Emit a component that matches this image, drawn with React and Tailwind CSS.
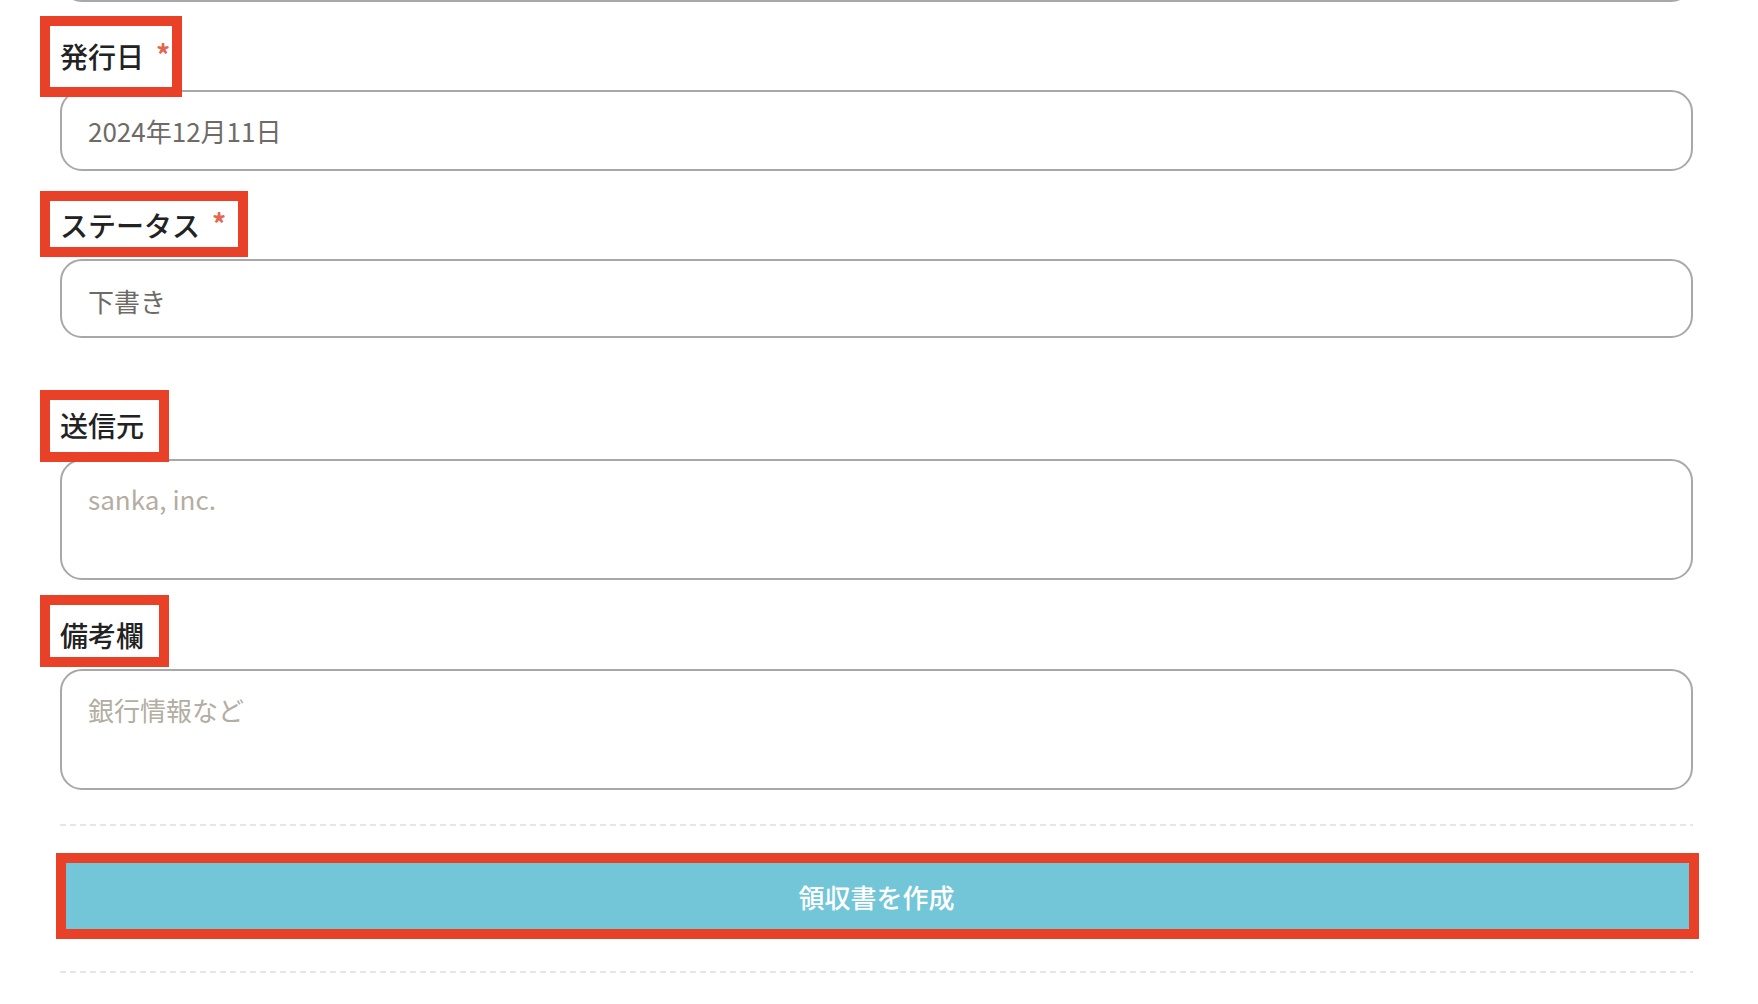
import React from 'react';

const font = { fontFamily: '"Noto Sans CJK JP", "Noto Sans", sans-serif' };

function Label({ text, required, box }) {
  return (
    <div className="relative h-[36px] leading-[36px] text-[28px] font-medium text-[#222222] flex items-center">
      <span>{text}</span>
      {required && <span className="ml-[12px] self-start mt-[-2px] text-[28px] font-bold text-[#e4664c]">*</span>}
      {/* annotation box */}
      <div className={`absolute left-[-20px] border-[10px] border-[#e94128] pointer-events-none ${box}`}></div>
    </div>
  );
}

function App() {
  return (
    <div className="min-h-screen bg-white overflow-hidden" style={font}>
      <div className="ml-[60px] w-[1633px] flex flex-col">
        {/* previous field, cut off at the top */}
        <div className="h-[60px] -mt-[58px] border-2 border-[#a8a8a8] rounded-[22px]"></div>

        <div className="mt-[36px]">
          <Label text="発行日" required box="top-[-22px] w-[142px] h-[81px]" />
          <div className="mt-[16px] h-[81px] border-2 border-[#a8a8a8] rounded-[22px] flex items-center pl-[26px] text-[26px] text-[#6e6b66]">
            2024年12月11日
          </div>
        </div>

        <div className="mt-[36px]">
          <Label text="ステータス" required box="top-[-16px] w-[208px] h-[66px]" />
          <div className="mt-[16px] h-[79px] border-2 border-[#a8a8a8] rounded-[22px] flex items-center pl-[26px] pt-[4px] text-[26px] text-[#6e6b66]">
            下書き
          </div>
        </div>

        <div className="mt-[69px]">
          <Label text="送信元" box="top-[-17px] w-[129px] h-[72px]" />
          <textarea
            className="mt-[16px] block w-full h-[121px] border-2 border-[#a8a8a8] rounded-[22px] pl-[26px] pt-[18px] text-[26px] leading-[39px] text-[#6e6b66] placeholder:text-[#b3ada2] resize-none outline-none"
            placeholder="sanka, inc."
          ></textarea>
        </div>

        <div className="mt-[36.5px]">
          <Label text="備考欄" box="top-[-21.5px] w-[129px] h-[72px]" />
          <textarea
            className="mt-[16px] block w-full h-[121px] border-2 border-[#a8a8a8] rounded-[22px] pl-[26px] pt-[19px] text-[26px] leading-[39px] text-[#6e6b66] placeholder:text-[#b3ada2] resize-none outline-none"
            placeholder="銀行情報など"
          ></textarea>
        </div>

        <div className="mt-[34px] h-[2px] bg-[linear-gradient(to_right,#e6e6e6_6px,transparent_6px)] bg-[length:10px_2px] bg-repeat-x"></div>

        <div className="relative mt-[32px]">
          <button className="w-full h-[76px] rounded-[16px] bg-[#73c6d8] text-white text-[26px] font-medium flex items-center justify-center pt-[2px]">
            領収書を作成
          </button>
          <div className="absolute top-[-5px] bottom-[-5px] left-[-4px] right-[-6px] border-[10px] border-[#e94128] pointer-events-none"></div>
        </div>

        <div className="mt-[37px] h-[2px] bg-[linear-gradient(to_right,#e6e6e6_6px,transparent_6px)] bg-[length:10px_2px] bg-repeat-x"></div>
      </div>
    </div>
  );
}

export default App;
